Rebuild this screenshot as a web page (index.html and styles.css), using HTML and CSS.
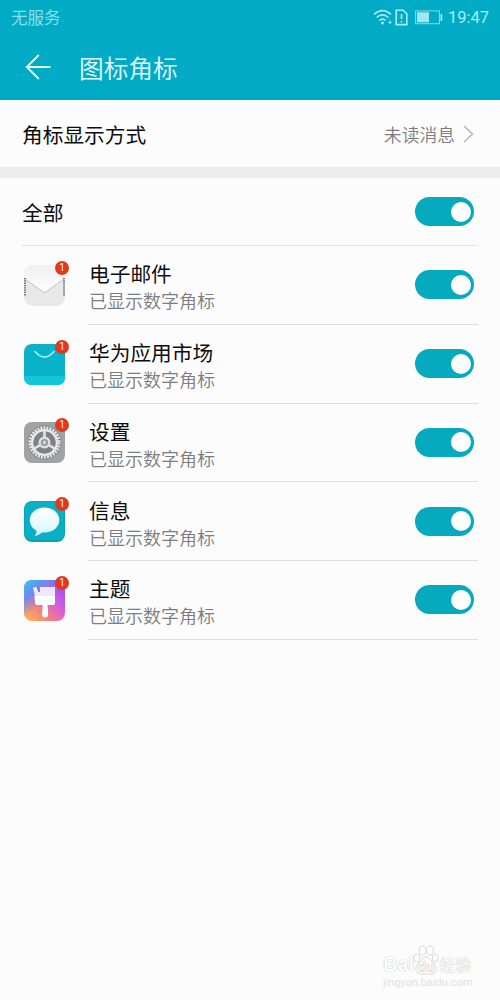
FILE: index.html
```html
<!DOCTYPE html>
<html lang="zh-CN">
<head>
  <meta charset="UTF-8">
  <title>图标角标</title>
  <link rel="stylesheet" href="styles.css">
</head>
<body>

  <header>
    <div class="status-bar">
      <span class="carrier">无服务</span>
      <div class="status-icons">
        <svg class="wifi" width="20" height="16" viewBox="0 0 20 16" fill="none" stroke="#a5eff6" stroke-width="1.6">
          <path d="M1 5.400Q9.500-2.400 18 5.400M3.600 8.500Q9.500 3.200 15.400 8.500M6.300 11.500Q9.500 8.600 12.700 11.500"/>
          <circle cx="9.500" cy="14" r="1.500" fill="#a5eff6" stroke="none"/>
          <path d="M15.300 13.500h3.200M17 11.300v3.600" stroke-width="1"/>
        </svg>
        <svg class="sim" width="13" height="17" viewBox="0 0 13 17" fill="none" stroke="#a5eff6" stroke-width="1.600">
          <path d="M1.200 1.200h7l3.600 3.600v10.800H1.200zM6.500 5v5M6.500 11.800v1.800"/>
        </svg>
        <svg class="battery" width="28" height="15" viewBox="0 0 28 15">
          <rect x=".6" y=".9" width="23.800" height="12.800" fill="none" stroke="#a5eff6" stroke-opacity=".75"/>
          <rect x="2" y="2.300" width="12" height="10" fill="#a5e3ee"/>
          <rect x="25.600" y="4" width="1.600" height="7" fill="#a5eff6"/>
        </svg>
        <span class="time">19:47</span>
      </div>
    </div>
    <div class="title-bar">
      <svg width="26" height="26" viewBox="0 0 26 26" fill="none" stroke="#e2fcff" stroke-width="1.900">
        <path d="M25.500 13H2M13.800 1L1.800 13l12 12"/>
      </svg>
      <h1>图标角标</h1>
    </div>
  </header>

  <div class="row mode">
    <span class="label">角标显示方式</span>
    <span class="value">未读消息</span>
    <svg width="11" height="18" viewBox="0 0 11 18" fill="none" stroke="#b9b9b9" stroke-width="1.600">
      <path d="M1 1l8.500 8L1 17"/>
    </svg>
  </div>

  <div class="divider"></div>

  <div class="row all">
    <span class="label">全部</span>
    <span class="switch"></span>
  </div>

  <div class="app">
    <div class="icon">
      <svg width="41" height="41" viewBox="0 0 41 41">
        <defs>
          <linearGradient id="flap" x1="0" y1="0" x2="0" y2="1">
            <stop offset="0" stop-color="#f0f0f0"/>
            <stop offset="1" stop-color="#fdfdfd"/>
          </linearGradient>
        </defs>
        <rect width="41" height="41" rx="9" fill="#e8e8e8"/>
        <path d="M0 13V9q0-9 9-9h23q9 0 9 9v4L22.500 26q-2 1.500-4 0z" fill="url(#flap)"/>
        <path d="M1 14l17.500 12.600q2 1.500 4 0L40 14" fill="none" stroke="#c6c6c6"/>
        <path d="M1 13v18M40 13v18" stroke="#777" stroke-width="2" stroke-dasharray="1.300 1"/>
      </svg>
      <span class="badge">1</span>
    </div>
    <div class="info">
      <div class="text">
        <div class="name">电子邮件</div>
        <div class="desc">已显示数字角标</div>
      </div>
      <span class="switch"></span>
    </div>
  </div>

  <div class="app">
    <div class="icon">
      <svg width="41" height="41" viewBox="0 0 41 41">
        <rect width="41" height="41" rx="8" fill="#17adbf"/>
        <path d="M1 9q0-8 8-8h23q8 0 8 8v23H1z" fill="#08b2c9"/>
        <path d="M0 32h41v1q0 8-8 8H8q-8 0-8-8z" fill="#14c5da"/>
        <path d="M11 7.500Q20.500 18.500 30 7.500" fill="none" stroke="#a8f3f7" stroke-width="1.500" stroke-linecap="round"/>
      </svg>
      <span class="badge">1</span>
    </div>
    <div class="info">
      <div class="text">
        <div class="name">华为应用市场</div>
        <div class="desc">已显示数字角标</div>
      </div>
      <span class="switch"></span>
    </div>
  </div>

  <div class="app">
    <div class="icon">
      <svg width="41" height="41" viewBox="0 0 41 41" fill="none">
        <rect width="41" height="41" rx="8" fill="#9fa3a6"/>
        <circle cx="20.500" cy="20.500" r="17" fill="#888c8f"/>
        <circle cx="20.500" cy="20.500" r="14.600" stroke="#ececec" stroke-width="3" stroke-dasharray="1.800 1.260"/>
        <circle cx="20.500" cy="20.500" r="12.300" stroke="#e8e8e8" stroke-width="2.600"/>
        <circle cx="20.500" cy="20.500" r="11" fill="#7f8386"/>
        <path d="M20.500 20.500V9M20.500 20.500l-10 5.800M20.500 20.500l10 5.800" stroke="#e3e3e3" stroke-width="2.600"/>
        <circle cx="20.500" cy="20.500" r="4.800" fill="#909497" stroke="#e0e0e0" stroke-width="2.400"/>
        <circle cx="20.500" cy="20.500" r="2" fill="#cfd1d2"/>
      </svg>
      <span class="badge">1</span>
    </div>
    <div class="info">
      <div class="text">
        <div class="name">设置</div>
        <div class="desc">已显示数字角标</div>
      </div>
      <span class="switch"></span>
    </div>
  </div>

  <div class="app">
    <div class="icon">
      <svg width="41" height="41" viewBox="0 0 41 41">
        <defs>
          <linearGradient id="bubble" x1="0" y1="0" x2="0" y2="1">
            <stop offset="0" stop-color="#ffffff"/>
            <stop offset="1" stop-color="#d4f6fa"/>
          </linearGradient>
        </defs>
        <rect width="41" height="41" rx="8" fill="#0aa3b5"/>
        <rect x="1" y="1" width="39" height="38" rx="7" fill="#09b0c4"/>
        <path d="M20.500 6.500C12 6.500 5.800 12 5.800 19c0 4.700 2.600 8.500 6.700 10.700.2 2-.6 3.700-2 5 3.300 0 5.600-1.400 7.200-3.300 10 1.200 17.600-4.700 17.600-12.400 0-7-6.300-12.500-14.800-12.500z" fill="url(#bubble)"/>
      </svg>
      <span class="badge">1</span>
    </div>
    <div class="info">
      <div class="text">
        <div class="name">信息</div>
        <div class="desc">已显示数字角标</div>
      </div>
      <span class="switch"></span>
    </div>
  </div>

  <div class="app">
    <div class="icon theme">
      <svg width="41" height="41" viewBox="0 0 41 41">
        <path d="M9 7.500l4-.5 2 5V7h16v9.500H11z" fill="#f1e7fb"/>
        <path d="M10.500 16h20.500v6.500q0 2.500-2.500 2.500h-5l.7 9.200a3.100 3.100 0 0 1-6.200 0L18.700 25h-5.200q-2.500 0-2.500-2.500z" fill="#fff"/>
        <path d="M13.200 7l2 5V7" fill="none" stroke="#6a62c8"/>
      </svg>
      <span class="badge">1</span>
    </div>
    <div class="info">
      <div class="text">
        <div class="name">主题</div>
        <div class="desc">已显示数字角标</div>
      </div>
      <span class="switch"></span>
    </div>
  </div>

  <div class="watermark">
    <div class="brand">
      <span>Bai</span>
      <svg width="26" height="31" viewBox="0 0 26 31" fill="#fdfdfd" stroke="#d8d8d8">
        <ellipse cx="9.500" cy="5.500" rx="3.300" ry="4.500"/>
        <ellipse cx="17" cy="5.500" rx="3.300" ry="4.500"/>
        <ellipse cx="3.700" cy="13" rx="3" ry="4"/>
        <ellipse cx="22.300" cy="13" rx="3" ry="4"/>
        <path d="M13 12c-3.500 0-4.500 3.500-7 6-3 3-4 5-2.500 8.500 1.500 3.500 5.500 2.500 9.500 2.500s8 1 9.500-2.500C24 23 23 21 20 18c-2.500-2.500-3.500-6-7-6z"/>
        <text x="13" y="27" text-anchor="middle">du</text>
      </svg>
      <span class="cn">经验</span>
    </div>
    <div class="url">jingyan.baidu.com</div>
  </div>

</body>
</html>
```

FILE: styles.css
```css
* {
  box-sizing: border-box;
}

body {
  margin: 0;
  height: 1000px;
  background-color: #fcfcfc;
  color: #0c0c0c;
  font-family: Roboto, 'Noto Sans CJK SC', sans-serif;
  overflow: hidden;
}

header {
  height: 100px;
  background-color: #02abc5;
}

.status-bar {
  display: flex;
  justify-content: space-between;
  align-items: center;
  height: 34px;
  padding: 0 11px;
  color: #a5eff6;
  font-size: 16.5px;
}

.carrier {
  color: #83dfeb;
}

.status-icons {
  display: flex;
  align-items: center;
}

.sim {
  margin-left: 2px;
}

.battery {
  margin-left: 7px;
}

.time {
  margin-left: 5px;
}

.title-bar {
  display: flex;
  align-items: center;
  height: 66px;
  padding-left: 25px;
}

h1 {
  margin: 0 0 0 28px;
  color: #e2fcff;
  font-size: 24.7px;
  font-weight: 350;
}

.row {
  display: flex;
  align-items: center;
  height: 67px;
  padding: 0 26px 0 22px;
}

.label {
  flex: 1;
  font-size: 20.7px;
}

.value {
  margin-right: 8px;
  color: #7d7d7d;
  font-size: 17.8px;
  font-weight: 350;
}

.divider {
  height: 11px;
  background-color: #ededed;
}

.all {
  height: 68px;
  margin: 0 22px;
  padding: 0 4px 0 0;
  border-bottom: 1px solid #e4e4e4;
}

.switch {
  display: flex;
  justify-content: flex-end;
  align-items: center;
  width: 59px;
  height: 29px;
  padding-right: 3px;
  border-radius: 15px;
  background-color: #05aabf;
}

.switch::after {
  content: "";
  width: 20px;
  height: 20px;
  border-radius: 50%;
  background-color: #fff;
}

.app {
  display: flex;
  align-items: center;
  height: 78.75px;
  margin: 0 22px;
}

.icon {
  position: relative;
  width: 41px;
  height: 41px;
  margin-left: 2px;
}

.icon svg {
  display: block;
}

.theme {
  border-radius: 8px;
  background: linear-gradient(45deg, #ffb84d 4%, #f37b86 36%, #d75ddd 60%, #a552ed 85%);
}

.theme::before {
  content: "";
  position: absolute;
  inset: 0;
  border-radius: 8px;
  background: linear-gradient(140deg, #35bdf2 5%, #6c8bef 25%, transparent 52%);
}

.theme svg {
  position: relative;
}

.badge {
  position: absolute;
  top: -4px;
  right: -4px;
  width: 14px;
  height: 14px;
  border-radius: 50%;
  background-color: #dd3a22;
  color: #ffe9e4;
  font-size: 10px;
  line-height: 14px;
  text-align: center;
}

.info {
  display: flex;
  flex: 1;
  justify-content: space-between;
  align-items: center;
  height: 100%;
  margin-left: 23px;
  padding-right: 4px;
  border-bottom: 1px solid #dedede;
}

.text {
  padding: 7px 0 0 1px;
}

.name {
  font-size: 20.7px;
  line-height: 27px;
}

.desc {
  color: #7d7d7d;
  font-size: 18px;
  font-weight: 350;
  line-height: 25px;
}

.watermark {
  position: absolute;
  left: 383px;
  top: 945px;
  width: 100px;
  color: #fdfdfd;
  text-shadow: 0 0 1px #bbb, 0 0 1px #ccc;
}

.brand {
  display: flex;
  align-items: flex-end;
  height: 31px;
  font: bold 20px/24px 'Liberation Sans', sans-serif;
}

.brand svg {
  flex: none;
  margin-left: -1px;
}

.brand text {
  font-size: 14px;
  stroke-width: 0.7px;
  text-shadow: none;
}

.cn {
  font: 16px/24px 'Noto Sans CJK SC', sans-serif;
  white-space: nowrap;
}

.url {
  color: #e2e2e2;
  font-size: 11px;
  line-height: 13px;
  text-shadow: none;
}
```
